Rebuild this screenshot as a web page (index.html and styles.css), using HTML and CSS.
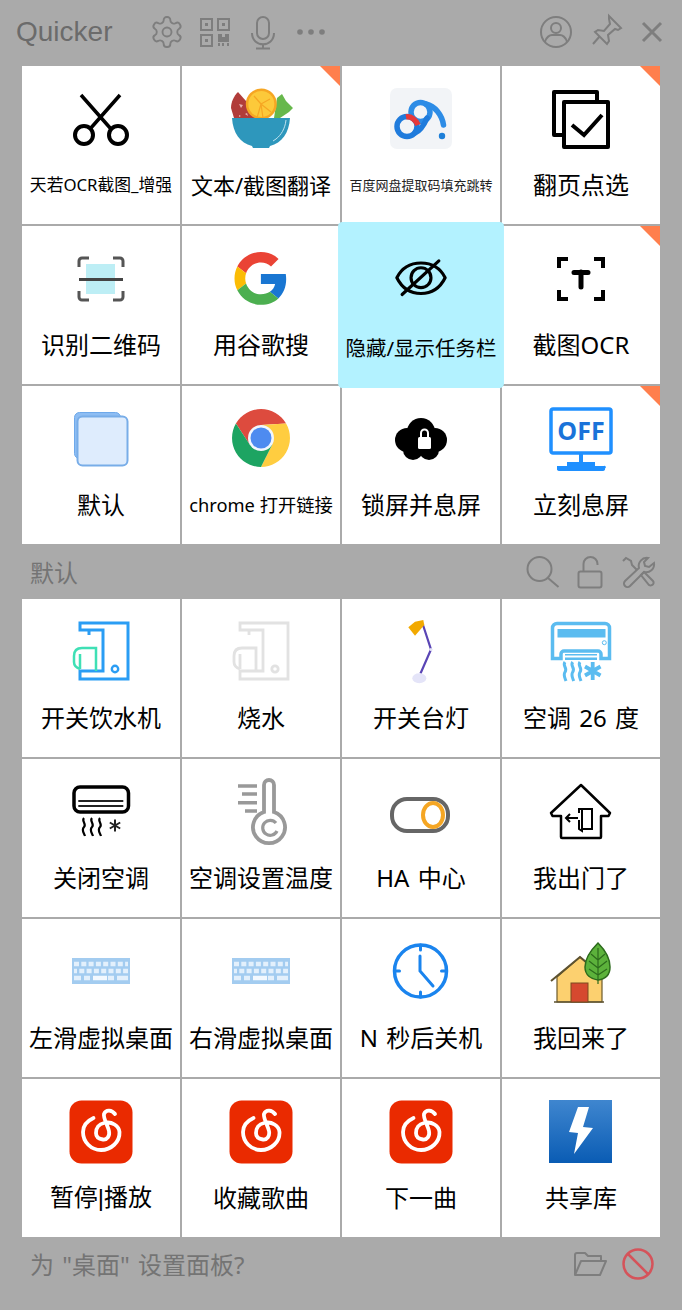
FILE: index.html
```html
<!DOCTYPE html>
<html lang="zh-CN">
<head>
<meta charset="utf-8">
<title>Quicker</title>
<link rel="stylesheet" href="styles.css">
</head>
<body>
<div class="app">
  <header class="topbar">
    <div class="brand">Quicker</div>
    <svg class="tool" viewBox="0 0 48 48"><g transform="translate(6 6) scale(1.5)" stroke-width="1.25"><path d="M12.22 2h-.44a2 2 0 0 0-2 2v.18a2 2 0 0 1-1 1.73l-.43.25a2 2 0 0 1-2 0l-.15-.08a2 2 0 0 0-2.73.73l-.22.38a2 2 0 0 0 .73 2.73l.15.1a2 2 0 0 1 1 1.72v.51a2 2 0 0 1-1 1.74l-.15.09a2 2 0 0 0-.73 2.73l.22.38a2 2 0 0 0 2.73.73l.15-.08a2 2 0 0 1 2 0l.43.25a2 2 0 0 1 1 1.73V20a2 2 0 0 0 2 2h.44a2 2 0 0 0 2-2v-.18a2 2 0 0 1 1-1.73l.43-.25a2 2 0 0 1 2 0l.15.08a2 2 0 0 0 2.73-.73l.22-.39a2 2 0 0 0-.73-2.73l-.15-.08a2 2 0 0 1-1-1.74v-.5a2 2 0 0 1 1-1.74l.15-.09a2 2 0 0 0 .73-2.73l-.22-.38a2 2 0 0 0-2.73-.73l-.15.08a2 2 0 0 1-2 0l-.43-.25a2 2 0 0 1-1-1.73V4a2 2 0 0 0-2-2z"/><circle cx="12" cy="12" r="3"/></g></svg>
    <svg class="tool" viewBox="0 0 48 48"><path d="M10 11h11v11H10zM27 11h11v11H27zM10 27h11v11H10z"/><path class="solid" d="M14 15h3v3h-3zM31 15h3v3h-3zM14 31h3v3h-3zM27 26h4v3h3v-3h4v8H27zM27 35h2v3h-2zM31 35h2v3h-2zM36 35h2v3h-2z"/></svg>
    <svg class="tool" viewBox="0 0 48 48"><rect x="18" y="9" width="12" height="22" rx="6"/><path d="M13 25c0 15 22 15 22 0M24 36v4M17 40.500h14"/></svg>
    <svg class="tool" viewBox="0 0 48 48"><circle class="solid" cx="13" cy="24" r="2.800"/><circle class="solid" cx="24" cy="24" r="2.800"/><circle class="solid" cx="35" cy="24" r="2.800"/></svg>
    <div class="topbar-end">
      <svg class="tool" viewBox="0 0 48 48"><circle cx="24" cy="24" r="15"/><circle cx="24" cy="20" r="5"/><path d="M13 34c1-5 5-7 7-7h8c2 0 6 2 7 7"/></svg>
      <svg class="tool" viewBox="0 0 48 48"><path d="M29 8l12 12-3 2-3-1-7 6 1 6-2 3-12-12 3-2 6 1 6-7-1-5zM20 28l-7 8"/></svg>
      <svg class="tool" viewBox="0 0 48 48"><path class="thick" d="M15 15l18 18M33 15L15 33"/></svg>
    </div>
  </header>

  <section class="grid">
    <div class="cell">
      <svg class="ic" viewBox="0 0 64 64"><g fill="none" stroke="#000"><path stroke-width="3.500" d="M12 8l30 34M51 8L21 42"/><circle stroke-width="4" cx="15" cy="48" r="9"/><circle stroke-width="4" cx="49" cy="48" r="9"/></g></svg>
      <div class="label small-a">天若OCR截图_增强</div>
    </div>
    <div class="cell corner">
      <svg class="ic" viewBox="0 0 64 64"><path fill="#b13c3a" d="M9 5c-4 4-7 10-7 16l3 10h27z"/><path fill="#e8b0b0" d="M10 17l4 1-2 3zM16 27l2-1 1 3zM10 28l2 1-2 1z"/><path fill="#67b84c" d="M48 11l5-4 4 7 7 7-4 4-9 6-6 0z"/><circle cx="32.300" cy="17" r="15.500" fill="#f6a623"/><circle cx="32.300" cy="17" r="13" fill="#fcc93a"/><path d="M32 17l2 14M32 17l-7-8M32 17l9-5M32 17l-4 14M32 17l10 8" stroke="#f6a623" stroke-width="1.200" fill="none"/><path fill="#2e97bc" d="M3 31h58c-1 15-8 25-20 28l-1 2H24l-1-2C11 56 4 46 3 31z"/><path d="M57 33c-1 9-5 15-10 19l-3 2" stroke="#bfe3ef" stroke-width="1" fill="none"/></svg>
      <div class="label small-e">文本/截图翻译</div>
    </div>
    <div class="cell">
      <svg class="ic" viewBox="0 0 64 64"><rect x="1" y="1" width="62" height="61" rx="7" fill="#f2f4f7"/><g fill="none" stroke-width="5.500" stroke-linecap="round"><circle cx="18" cy="39.500" r="10" stroke="#1f7bdc"/><circle cx="31.500" cy="25" r="9.500" stroke="#2d8ce6"/><path stroke="#2d8ce6" d="M37 17c9 2 16 11 17.500 21"/><path stroke="#1f7bdc" d="M26 46c5-2 9-8 12-15"/><path stroke="#e8393a" stroke-linecap="butt" d="M17 30c5-1 10 3 12 8"/></g><circle cx="53" cy="49" r="3.200" fill="#1e7fd8"/></svg>
      <div class="label small-b">百度网盘提取码填充跳转</div>
    </div>
    <div class="cell corner">
      <svg class="ic" viewBox="0 0 64 64"><g fill="#fff" stroke="#000" stroke-width="4" stroke-linejoin="round"><rect x="5" y="5" width="43" height="43"/><rect x="15" y="15" width="44" height="45"/></g><path d="M23 38l12 10 18-20" fill="none" stroke="#000" stroke-width="4"/></svg>
      <div class="label">翻页点选</div>
    </div>

    <div class="cell">
      <svg class="ic" viewBox="0 0 64 64"><rect x="17" y="17" width="29" height="30" fill="#bdeef5"/><path d="M10 20v-6a3 3 0 0 1 3-3h7M44 11h7a3 3 0 0 1 3 3v6M54 44v6a3 3 0 0 1-3 3h-7M20 53h-7a3 3 0 0 1-3-3v-6" fill="none" stroke="#555" stroke-width="3"/><path d="M10 32.500h44" stroke="#444" stroke-width="3"/></svg>
      <div class="label">识别二维码</div>
    </div>
    <div class="cell">
      <svg class="ic" viewBox="0 0 64 64"><g transform="translate(5.500 5) scale(1.100)"><path fill="#ea4335" d="M24 9.500c3.540 0 6.710 1.220 9.210 3.600l6.850-6.850C35.900 2.380 30.470 0 24 0 14.620 0 6.510 5.380 2.560 13.220l7.980 6.190C12.430 13.720 17.740 9.500 24 9.500z"/><path fill="#1976d2" d="M46.980 24.550c0-1.570-.15-3.090-.38-4.550H24v9.020h12.940c-.58 2.960-2.260 5.480-4.780 7.180l7.730 6c4.510-4.180 7.090-10.360 7.090-17.650z"/><path fill="#fbbc05" d="M10.530 28.590c-.5-1.450-.78-2.990-.78-4.590s.27-3.140.78-4.590l-7.980-6.190C.92 16.460 0 20.120 0 24c0 3.880.92 7.540 2.560 10.780l7.970-6.190z"/><path fill="#4caf50" d="M24 48c6.480 0 11.930-2.130 15.890-5.810l-7.730-6c-2.150 1.450-4.920 2.300-8.160 2.300-6.260 0-11.570-4.220-13.470-9.910l-7.980 6.190C6.510 42.620 14.620 48 24 48z"/></g></svg>
      <div class="label">用谷歌搜</div>
    </div>
    <div class="cell active">
      <svg class="ic" viewBox="0 0 64 64"><path d="M9 32C14 22 22 18 32 18s18 4 23 14c-5 10-13 15-23 15S14 42 9 32z" fill="none" stroke="#000" stroke-width="3" stroke-linejoin="round"/><circle cx="32" cy="32" r="9.500" fill="none" stroke="#000" stroke-width="3"/><path d="M14 48l35-32" stroke="#000" stroke-width="3" stroke-linecap="round"/></svg>
      <div class="label small-c">隐藏/显示任务栏</div>
    </div>
    <div class="cell corner">
      <svg class="ic" viewBox="0 0 64 64"><path d="M10 21v-9h9M45 12h9v9M10 43v9h9M45 52h9v-9" fill="none" stroke="#000" stroke-width="4"/><path d="M25 25.500h14M32 25v15" stroke="#000" stroke-width="5" stroke-linecap="round"/></svg>
      <div class="label">截图OCR</div>
    </div>

    <div class="cell">
      <svg class="ic" viewBox="0 0 64 64"><rect x="5.500" y="5.500" width="46" height="46" rx="5" fill="#8dbdf3" stroke="#6ea9ea"/><rect x="8.500" y="9.500" width="50" height="49" rx="5" fill="#deecfd" stroke="#78ade8" stroke-width="2"/></svg>
      <div class="label">默认</div>
    </div>
    <div class="cell">
      <svg class="ic" viewBox="0 0 64 64"><path fill="#dd4b3e" d="M6.900 16.500a29 29 0 0 1 50.200 0L32 18 20.700 37.500z"/><path fill="#ffcd40" transform="rotate(120 32 31)" d="M6.900 16.500a29 29 0 0 1 50.200 0L32 18 20.700 37.500z"/><path fill="#1da462" transform="rotate(240 32 31)" d="M6.900 16.500a29 29 0 0 1 50.200 0L32 18 20.700 37.500z"/><circle cx="32" cy="31" r="13" fill="#f2f6fd"/><circle cx="32" cy="31" r="10.500" fill="#4e8bf0"/></svg>
      <div class="label small-d">chrome 打开链接</div>
    </div>
    <div class="cell">
      <svg class="ic" viewBox="0 0 64 64"><g fill="#000"><circle cx="32" cy="25" r="14"/><circle cx="18" cy="33" r="12"/><circle cx="46" cy="33" r="12"/><circle cx="24" cy="43" r="10"/><circle cx="40" cy="43" r="10"/><circle cx="32" cy="36" r="12"/></g><rect x="29" y="30" width="13" height="12" rx="1.500" fill="#fff"/><path d="M32 30v-4a3.500 3.500 0 0 1 7 0v4" fill="none" stroke="#fff" stroke-width="2"/></svg>
      <div class="label">锁屏并息屏</div>
    </div>
    <div class="cell corner">
      <svg class="ic" viewBox="0 0 64 64"><rect x="2" y="2" width="60" height="44" rx="2" fill="#fff" stroke="#1f90ff" stroke-width="3.500"/><text class="off" x="32" y="33" text-anchor="middle">OFF</text><path fill="#1f90ff" d="M30 47h4v8h-4zM18 55h28v4H18zM8 59h47a1 1 0 0 1 1 2.500 2 2 0 0 1-2 2.500H10a2 2 0 0 1-2-2.500z"/></svg>
      <div class="label">立刻息屏</div>
    </div>
  </section>

  <div class="section-bar">
    <div class="section-title">默认</div>
    <div class="topbar-end">
      <svg class="tool" viewBox="0 0 48 48"><circle cx="21.500" cy="21" r="12"/><path d="M30 30l10.500 9"/></svg>
      <svg class="tool" viewBox="0 0 48 48"><rect x="12.500" y="23.500" width="23" height="16" rx="2"/><path d="M17.500 23.500V16a7 7 0 0 1 14 0v1"/></svg>
      <svg class="tool" viewBox="0 0 48 48"><path d="M34 10a8 8 0 0 0-9 10L11 33a3.500 3.500 0 0 0 5 5l14-14a8 8 0 0 0 10-9l-5 4-4-1-1-4z"/><path d="M9 13l3-3 5 3 1 4 5 5M27 27l3-3 9 9a2.500 2.500 0 0 1-1 4 2.500 2.500 0 0 1-3 0z"/></svg>
    </div>
  </div>

  <section class="grid">
    <div class="cell">
      <svg class="ic" viewBox="0 0 64 64"><path d="M11 10V3h48v56H11V51h23V10zM20 10v5" fill="none" stroke="#2a9df4" stroke-width="3"/><circle cx="46" cy="49" r="3.200" fill="none" stroke="#2a9df4" stroke-width="2.400"/><path d="M27 51V28H13q-8 0-8 8v6q0 5 6 7M11 34v15" fill="none" stroke="#3fe0b5" stroke-width="2.500"/></svg>
      <div class="label">开关饮水机</div>
    </div>
    <div class="cell">
      <svg class="ic" viewBox="0 0 64 64"><g fill="none" stroke="#e2e2e2" stroke-width="2.800"><path d="M11 10V3h48v56H11V51h23V10zM20 10v5"/><circle cx="46" cy="49" r="3.200"/><path d="M27 51V28H13q-8 0-8 8v6q0 5 6 7M11 34v15"/></g></svg>
      <div class="label">烧水</div>
    </div>
    <div class="cell">
      <svg class="ic" viewBox="0 0 64 64"><path d="M34 5l8 24.500-10.500 24" fill="none" stroke="#5a45b5" stroke-width="2.200"/><path d="M19.300 7.300L26 1.700 34.300 0l1 5L26 15.700z" fill="#f2a900"/><circle cx="42" cy="29.500" r="1.500" fill="#e4e4f8"/><ellipse cx="30.300" cy="58.300" rx="7" ry="5" fill="#e4e4f8"/></svg>
      <div class="label">开关台灯</div>
    </div>
    <div class="cell">
      <svg class="ic" viewBox="0 0 64 64"><path d="M8 3.500h48a4.500 4.500 0 0 1 4.500 4.500v30.500H52V34a3 3 0 0 0-3-3H15a3 3 0 0 0-3 3v4.500H3.500V8A4.500 4.500 0 0 1 8 3.500z" fill="none" stroke="#5bbcf0" stroke-width="3.500"/><path fill="#5bbcf0" d="M8.500 9h48v8.500h-48zM16 34h32v1.500H16zM16 37.500h32V40H16z"/><circle cx="55.300" cy="22.700" r="2" fill="none" stroke="#5bbcf0"/><g fill="none" stroke="#5bbcf0" stroke-width="3"><path d="M16 42c-3 4 3 6 0 10-2 3 0 6 1 9M23.700 42c-3 4 3 6 0 10-2 3 0 6 1 9M31 42c-3 4 3 6 0 10-2 3 0 6 1 9"/><path stroke-width="3.800" d="M43.700 42v18M36 46.500l15.500 9M51.500 46.500l-15.500 9"/></g></svg>
      <div class="label">空调 26 度</div>
    </div>

    <div class="cell">
      <svg class="ic" viewBox="0 0 64 64"><rect x="5" y="7" width="54.500" height="25" rx="6" fill="none" stroke="#000" stroke-width="3.500"/><path d="M9.300 21h45M9.300 26h45" stroke="#222" stroke-width="2"/><path d="M15 38c-3 3 3 6 0 9-3 3 0 6 1 9M23 38c-3 3 3 6 0 9-3 3 0 6 1 9M31 38c-3 3 3 6 0 9-3 3 0 6 1 9" fill="none" stroke="#000" stroke-width="2.200"/><path d="M46 39.500v12M40.800 42.500l10.400 6M51.200 42.500l-10.400 6" stroke="#222" stroke-width="2"/></svg>
      <div class="label">关闭空调</div>
    </div>
    <div class="cell">
      <svg class="ic" viewBox="0 0 64 64"><path d="M9 6h19M13 14h15M9 22.700h19M16 31h12" stroke="#999" stroke-width="3.500"/><path d="M35 32V5a5 5 0 0 1 10 0v27a16 16 0 1 1-10 0z" fill="#fff" stroke="#999" stroke-width="3.800"/><path d="M47 43a7.500 7.500 0 1 0 1 8" fill="none" stroke="#999" stroke-width="3.200"/></svg>
      <div class="label">空调设置温度</div>
    </div>
    <div class="cell">
      <svg class="ic" viewBox="0 0 64 64"><rect x="3" y="19" width="56" height="32" rx="15" fill="#fff" stroke="#666" stroke-width="4"/><ellipse cx="44" cy="35" rx="10" ry="12" fill="#fff" stroke="#f5a623" stroke-width="4"/></svg>
      <div class="label">HA 中心</div>
    </div>
    <div class="cell">
      <svg class="ic" viewBox="0 0 64 64"><path d="M32 5L61 33l-1.500 3H52v21a1 1 0 0 1-1 1H13a1 1 0 0 1-1-1V36H3.500L2 33z" fill="none" stroke="#000" stroke-width="2.500" stroke-linejoin="round"/><path d="M30 33v-4h13v20H33M30 40v9l3 2V30" fill="none" stroke="#000" stroke-width="2"/><path d="M29 38H18M21 34l-4 4 4 4" fill="none" stroke="#000" stroke-width="2"/></svg>
      <div class="label">我出门了</div>
    </div>

    <div class="cell">
      <svg class="ic" viewBox="0 0 64 64"><rect x="3" y="18" width="58" height="26" fill="#a3ccf0"/><g stroke="#e3f0fc" stroke-width="4.500" fill="none"><path stroke-dasharray="5 2.300" d="M5 24h54"/><path stroke-dasharray="5 2.300" d="M5 31h54" stroke-dashoffset="2"/><path d="M5 38h7M15 38h6M39 38h6M48 38h11"/><path d="M24 38h14" stroke="#f3f9ff"/></g></svg>
      <div class="label">左滑虚拟桌面</div>
    </div>
    <div class="cell">
      <svg class="ic" viewBox="0 0 64 64"><rect x="3" y="18" width="58" height="26" fill="#a3ccf0"/><g stroke="#e3f0fc" stroke-width="4.500" fill="none"><path stroke-dasharray="5 2.300" d="M5 24h54"/><path stroke-dasharray="5 2.300" d="M5 31h54" stroke-dashoffset="2"/><path d="M5 38h7M15 38h6M39 38h6M48 38h11"/><path d="M24 38h14" stroke="#f3f9ff"/></g></svg>
      <div class="label">右滑虚拟桌面</div>
    </div>
    <div class="cell">
      <svg class="ic" viewBox="0 0 64 64"><g fill="none" stroke="#1a84ee"><circle cx="31.500" cy="31" r="26" stroke-width="3.500"/><path stroke-width="3" stroke-linecap="round" d="M31.500 5v5M31.500 52v5M5.500 31h5M52.500 31h5M31 16v15l13 15"/></g></svg>
      <div class="label">N 秒后关机</div>
    </div>
    <div class="cell">
      <svg class="ic" viewBox="0 0 64 64"><path d="M8 62V37L31 17l22 20v25z" fill="#fcd06f" stroke="#6d5a2a" stroke-width="1.200"/><path d="M2 41L31 17l22 18" fill="none" stroke="#5d5230" stroke-width="2"/><path d="M5 62h50" stroke="#5d5230" stroke-width="1.500"/><rect x="22" y="43" width="17" height="19" fill="#d6492f" stroke="#7a4a20" stroke-width="1"/><path d="M49 3c7 7 12 15 12 24 0 8-5 12-12 13-7-1-13-5-13-13 0-9 6-17 13-24z" fill="#5cb23b" stroke="#2c6b1c" stroke-width="1.500"/><path d="M49 8v36M49 20l-7-6M49 20l7-6M49 28l-9-7M49 28l9-7M49 35l-9-6M49 35l9-6" stroke="#2c6b1c" stroke-width="1.200" fill="none"/></svg>
      <div class="label">我回来了</div>
    </div>

    <div class="cell">
      <svg class="ic" viewBox="0 0 64 64"><rect x="0.500" y="0.500" width="63" height="63" rx="12" fill="#ea2a00"/><path class="swirl" d="M46 14C43 10 37 9 35 14 34 18 39 26 40 31 41 36 38 40 34 39.500 30 39 27 37 27 33 27 28 30 24 35 23 43 21 50 26 50.500 32 51 42 42 50 32 50 22 50 14 42 14 32 14 26 18 21 24.500 18"/></svg>
      <div class="label pipe">暂停|播放</div>
    </div>
    <div class="cell">
      <svg class="ic" viewBox="0 0 64 64"><rect x="0.500" y="0.500" width="63" height="63" rx="12" fill="#ea2a00"/><path class="swirl" d="M46 14C43 10 37 9 35 14 34 18 39 26 40 31 41 36 38 40 34 39.500 30 39 27 37 27 33 27 28 30 24 35 23 43 21 50 26 50.500 32 51 42 42 50 32 50 22 50 14 42 14 32 14 26 18 21 24.500 18"/></svg>
      <div class="label">收藏歌曲</div>
    </div>
    <div class="cell">
      <svg class="ic" viewBox="0 0 64 64"><rect x="0.500" y="0.500" width="63" height="63" rx="12" fill="#ea2a00"/><path class="swirl" d="M46 14C43 10 37 9 35 14 34 18 39 26 40 31 41 36 38 40 34 39.500 30 39 27 37 27 33 27 28 30 24 35 23 43 21 50 26 50.500 32 51 42 42 50 32 50 22 50 14 42 14 32 14 26 18 21 24.500 18"/></svg>
      <div class="label">下一曲</div>
    </div>
    <div class="cell">
      <svg class="ic" viewBox="0 0 64 64"><defs><linearGradient id="bolt-bg" x1="0" y1="0" x2="0" y2="1"><stop offset="0" stop-color="#3f86cf"/><stop offset="1" stop-color="#0a5cb4"/></linearGradient></defs><rect x="0" y="0" width="63" height="63" fill="url(#bolt-bg)"/><path fill="#fff" d="M29 7h11l-6 20 10 1-19 26 4-21-9-1z"/></svg>
      <div class="label">共享库</div>
    </div>
  </section>

  <footer class="footer">
    <div class="section-title">为 "桌面" 设置面板?</div>
    <div class="topbar-end">
      <svg class="tool" viewBox="0 0 48 48"><path d="M9 35V15a2 2 0 0 1 2-2h8l3 3h13v5M9 35l6-14h25l-6 14z" stroke-linejoin="round"/></svg>
      <svg class="tool ban" viewBox="0 0 48 48"><circle cx="24" cy="24" r="14.500"/><path d="M14 14l20 20"/></svg>
    </div>
  </footer>
</div>
</body>
</html>
```

FILE: styles.css
```css
* { box-sizing: border-box; }

html, body {
  margin: 0;
  padding: 0;
  background: #aaaaaa;
}

.app {
  width: 682px;
  height: 1310px;
  overflow: hidden;
  font-family: "Noto Sans", "Noto Sans CJK SC", sans-serif;
}

.topbar {
  height: 66px;
  padding: 0 6px 2px 0;
  display: flex;
  align-items: center;
}

.brand {
  width: 143px;
  padding-left: 16px;
  font-family: "Liberation Sans", sans-serif;
  font-size: 28px;
  color: #6b6b6b;
}

.topbar-end {
  margin-left: auto;
  display: flex;
  align-items: center;
}

.tool {
  width: 48px;
  height: 48px;
  flex: none;
  fill: none;
  stroke: #7e7e7e;
  stroke-width: 2;
}

.tool .solid {
  fill: #7e7e7e;
  stroke: none;
}

.tool .thick {
  stroke-width: 3;
}

.tool.ban {
  stroke: #d5535a;
  stroke-width: 2.500;
}

.grid {
  margin: 0 22px;
  display: grid;
  grid-template-columns: repeat(4, 158px);
  grid-auto-rows: 158px;
  gap: 2px;
}

.cell {
  position: relative;
  background: #ffffff;
  padding-top: 21px;
  display: flex;
  flex-direction: column;
  align-items: center;
}

.cell.corner::after {
  content: "";
  position: absolute;
  top: 0;
  right: 0;
  border-style: solid;
  border-width: 0 20px 20px 0;
  border-color: transparent #ff7f4d transparent transparent;
}

.cell.active {
  background: #b3f2ff;
  border-radius: 4px;
  transform: scale(1.05);
  z-index: 1;
}

.ic {
  width: 64px;
  height: 64px;
  flex: none;
  overflow: visible;
}

.off {
  font-family: "Open Sans", "Liberation Sans", sans-serif;
  font-weight: 700;
  font-size: 25px;
  fill: #1a73d9;
}

.swirl {
  fill: none;
  stroke: #ffffff;
  stroke-width: 3.800;
  stroke-linecap: round;
}

.label {
  margin-top: 16px;
  height: 36px;
  line-height: 36px;
  font-size: 24px;
  color: #000000;
  white-space: nowrap;
  word-spacing: 2px;
}

.label.small-a { font-size: 16.800px; }
.label.small-b { font-size: 13px; color: #222222; }
.label.small-c { font-size: 19.500px; margin-top: 18px; }
.label.small-d { font-size: 18.300px; word-spacing: 0; }
.label.small-e { font-size: 22px; }
.label.pipe { font-family: "Liberation Sans", "Noto Sans CJK SC", sans-serif; }

.section-bar {
  height: 55px;
  padding: 0 20px 0 30px;
  display: flex;
  align-items: center;
}

.section-title {
  font-size: 24px;
  line-height: 36px;
  color: #747474;
  word-spacing: 2px;
}

.section-bar .section-title {
  margin-top: 3px;
}

.footer {
  height: 73px;
  padding: 3px 20px 0 30px;
  display: flex;
  align-items: flex-start;
}

.footer .section-title {
  margin-top: 7px;
}
```
